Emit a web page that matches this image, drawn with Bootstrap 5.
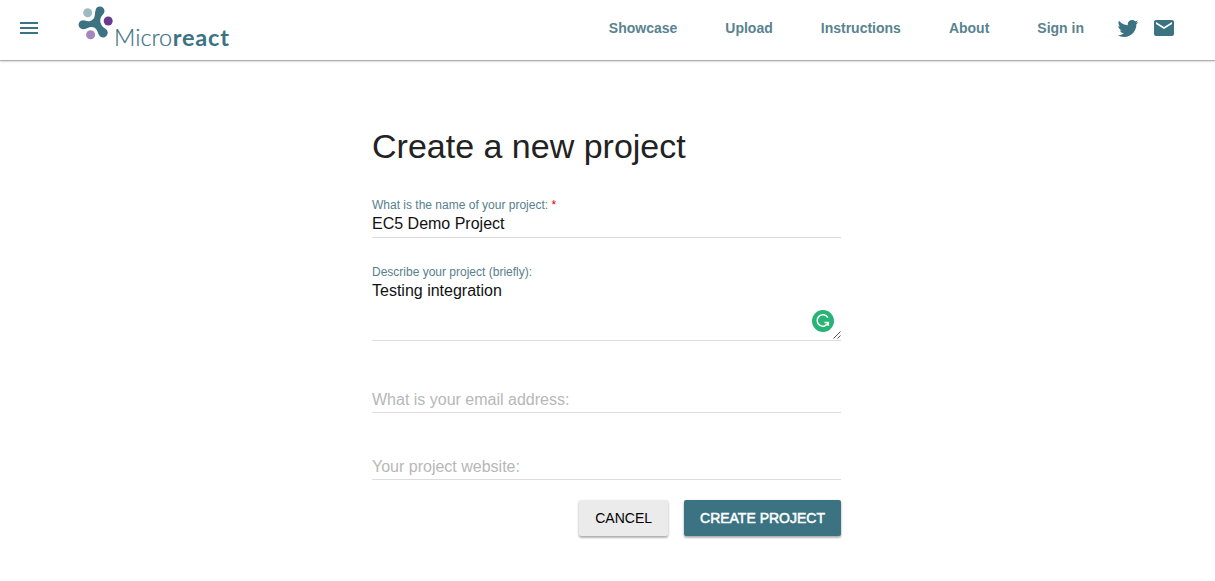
<!DOCTYPE html>
<html lang="en">
<head>
<meta charset="utf-8">
<meta name="viewport" content="width=device-width, initial-scale=1">
<title>Microreact - Create a new project</title>
<link href="https://cdn.jsdelivr.net/npm/bootstrap@5.3.0/dist/css/bootstrap.min.css" rel="stylesheet">
<style>
  :root { --teal: #3c7383; }
  body { font-family: "Liberation Sans", Arial, sans-serif; color: #222; background: #fff; min-height: 100vh; }
  .topbar { height: 60px; padding: 0 39px 4px 20px; box-shadow: 0 1px 1px rgba(0,0,0,.22), 0 1px 3px rgba(0,0,0,.2); --bs-navbar-padding-y: 0; }
  .menu-toggle { width: 18px; color: var(--teal); line-height: 0; }
  .brand { margin-left: 40px; height: 56px; color: var(--teal); }
  .brand-mark { margin-top: 5px; }
  .wordmark { font-family: Lato, sans-serif; font-weight: 300; font-size: 23.5px; line-height: 28px; margin: 23px 0 0 1px; -webkit-text-stroke: .2px var(--teal); }
  .wordmark b { font-weight: 700; letter-spacing: .8px; margin-left: .5px; -webkit-text-stroke: 0; }
  .main-nav .nav-link { font-size: 14px; font-weight: 700; line-height: 20px; color: #59838f; padding: 0 24px; }
  .social { gap: 12px; }
  .project-form { width: 469px; margin: 64px 0 0 calc(50% - 235.5px); }
  h1 { font-size: 34px; line-height: 44px; font-weight: 400; color: #222; }
  .field { border-bottom: 1px solid #ddd; }
  .field label { font-size: 12px; line-height: 16px; color: #57808d; display: block; }
  .field .form-control { font-size: 16px; line-height: 20px; color: #111; padding: 1px 0 0; border: 0; border-radius: 0; resize: none; box-shadow: none; background: transparent; }
  .field .form-control::placeholder { color: #b7b7b7; opacity: 1; }
  .required { color: #d40000; }
  .field-name { margin-top: 29px; height: 41px; }
  .field-about { margin-top: 26px; height: 77px; }
  .field-email { margin-top: 48px; height: 24px; }
  .field-site { margin-top: 43px; height: 24px; }
  .actions { margin-top: 20px; }
  .checker { right: 7.500px; bottom: 8px; }
  .grip { right: 0; bottom: 1px; }
  .action { height: 36px; padding: 0 16px; font-size: 14px; line-height: 36px; border: 0; border-radius: 2px; box-shadow: 0 2px 2px rgba(0,0,0,.2), 0 1px 3px rgba(0,0,0,.2); }
  .action-cancel, .action-cancel:hover { background: #ebebeb; color: #000; }
  .action-create, .action-create:hover { background: var(--teal); color: #fff; -webkit-text-stroke: .5px #fff; }
</style>
</head>
<body>
<header class="navbar topbar flex-nowrap align-items-center justify-content-between">
  <div class="d-flex align-items-center">
    <button class="btn p-0 border-0 menu-toggle" type="button" aria-label="Menu">
      <svg width="18" height="12" fill="currentColor"><path d="M0 0h18v2H0zM0 5h18v2H0zM0 10h18v2H0z"/></svg>
    </button>
    <a class="brand d-flex align-items-start text-decoration-none" href="#">
      <svg class="brand-mark" width="35" height="36" viewBox="78 5 35 36">
        <path d="M100 6.500a4.500 4.500 0 0 1 4.500 4.800c-.2 3-3.700 4.400-4.200 8.200-.4 3.600 1.200 7.200 4.800 9a4.700 4.700 0 1 1-6.500 5.800c-1.200-3.700-3-7.300-7-7.300-3.300 0-4.500 1.900-8.200 2.200a4.500 4.500 0 1 1 1.500-8.600c3.200 1.300 5.700.8 8-1.300 2.700-2.500 1.600-5.600 2.600-8.900a4.500 4.500 0 0 1 4.500-3.900z" fill="#3c7383"/>
        <circle cx="87.700" cy="12.800" r="4.500" fill="#9dbac3"/>
        <circle cx="108.200" cy="21" r="4.500" fill="#673c8f"/>
        <circle cx="90.600" cy="34.800" r="4.500" fill="#a387bd"/>
      </svg>
      <span class="wordmark">Micro<b>react</b></span>
    </a>
  </div>
  <div class="d-flex align-items-center">
    <nav class="nav main-nav flex-nowrap">
      <a class="nav-link" href="#">Showcase</a>
      <a class="nav-link" href="#">Upload</a>
      <a class="nav-link" href="#">Instructions</a>
      <a class="nav-link" href="#">About</a>
      <a class="nav-link" href="#">Sign in</a>
    </nav>
    <div class="social d-flex align-items-center ms-2 me-n1">
      <svg width="24" height="24" viewBox="0 0 24 24" fill="#3c7383"><path d="M22.460 6c-.77.35-1.600.58-2.460.69.88-.53 1.560-1.370 1.880-2.380-.83.5-1.750.85-2.720 1.050C18.370 4.500 17.260 4 16 4c-2.350 0-4.270 1.920-4.270 4.290 0 .34.04.67.11.98C8.280 9.090 5.110 7.380 3 4.790c-.37.63-.58 1.370-.58 2.150 0 1.490.75 2.810 1.910 3.560-.71 0-1.370-.2-1.950-.5v.03c0 2.080 1.480 3.820 3.440 4.210a4.220 4.220 0 0 1-1.930.07 4.280 4.280 0 0 0 4 2.980 8.521 8.521 0 0 1-5.330 1.840c-.34 0-.68-.02-1.020-.06C3.440 20.290 5.700 21 8.120 21 16 21 20.330 14.460 20.330 8.790c0-.19 0-.37-.01-.56.84-.6 1.560-1.360 2.140-2.230z"/></svg>
      <svg width="24" height="24" viewBox="0 0 24 24" fill="#3c7383"><path d="M20 4H4c-1.100 0-1.990.9-1.990 2L2 18c0 1.100.9 2 2 2h16c1.100 0 2-.9 2-2V6c0-1.100-.9-2-2-2zm0 4l-8 5-8-5V6l8 5 8-5v2z"/></svg>
    </div>
  </div>
</header>
<main class="container-fluid p-0">
  <form class="project-form" onsubmit="return false">
    <h1 class="mb-0">Create a new project</h1>
    <div class="field field-name">
      <label for="pname">What is the name of your project: <span class="required">*</span></label>
      <input class="form-control" id="pname" value="EC5 Demo Project">
    </div>
    <div class="field field-about position-relative">
      <label for="pdesc">Describe your project (briefly):</label>
      <textarea class="form-control" id="pdesc" rows="3" spellcheck="false">Testing integration</textarea>
      <svg class="checker position-absolute" width="22" height="22" viewBox="0 0 22 22"><circle cx="11" cy="11" r="11" fill="#27b474"/><path d="M15.800 7.600A5.700 5.700 0 1 0 16.200 12.600H12.500M16.300 11.800v4" fill="none" stroke="#fff" stroke-width="1.500"/></svg>
      <svg class="grip position-absolute" width="8" height="8" viewBox="0 0 8 8"><path d="M.5 7.500l7-7M4.500 7.500l3-3" stroke="#555" fill="none"/></svg>
    </div>
    <div class="field field-email">
      <input class="form-control" type="email" placeholder="What is your email address:" aria-label="What is your email address:">
    </div>
    <div class="field field-site">
      <input class="form-control" placeholder="Your project website:" aria-label="Your project website:">
    </div>
    <div class="actions d-flex justify-content-end gap-3">
      <button class="btn action action-cancel" type="button">CANCEL</button>
      <button class="btn action action-create" type="submit">CREATE PROJECT</button>
    </div>
  </form>
</main>
<script src="https://cdn.jsdelivr.net/npm/bootstrap@5.3.0/dist/js/bootstrap.bundle.min.js"></script>
</body>
</html>
